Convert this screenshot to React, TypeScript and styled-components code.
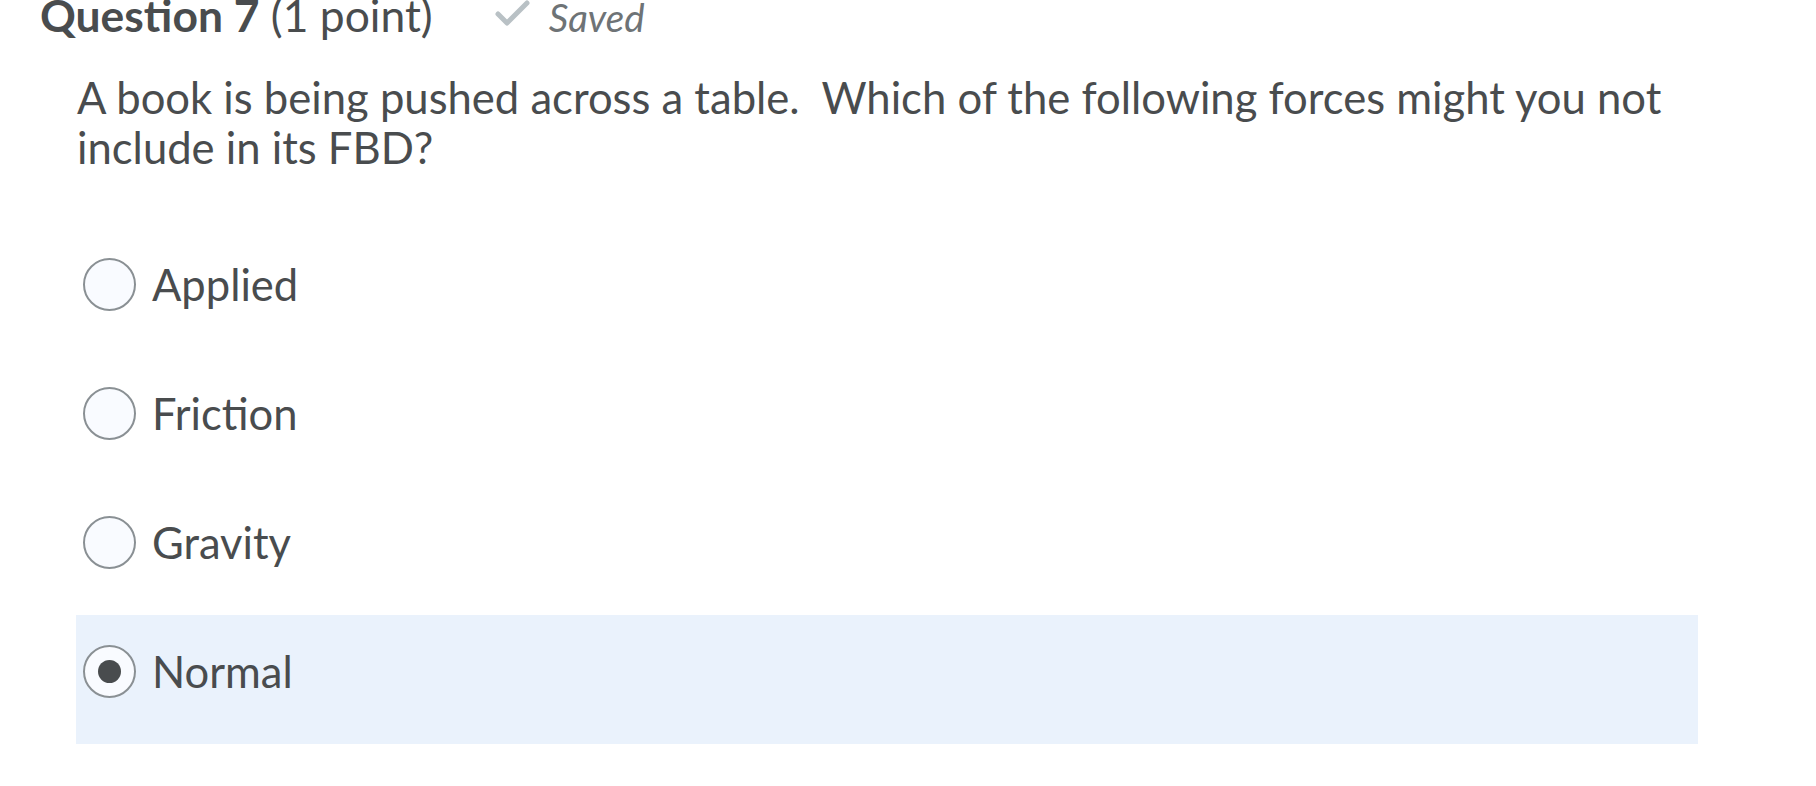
import React from "react";
import styled, { createGlobalStyle } from "styled-components";

const Global = createGlobalStyle`
  html, body { margin: 0; padding: 0; background: #ffffff; }
  body { font-family: Lato, "Noto Sans", sans-serif; color: #494c4e; }
`;

const Page = styled.div`
  display: flex;
  flex-direction: column;
  width: 1816px;
  height: 786px;
  overflow: hidden;
`;

const Header = styled.div`
  display: flex;
  align-items: baseline;
  padding-left: 40px;
  height: 30px;
  line-height: 30px;
`;

const Title = styled.h2`
  margin: 0;
  font-size: 44.4px;
  font-weight: 400;
  color: #494c4e;
  b { font-weight: 700; }
`;

const Status = styled.span`
  display: inline-flex;
  align-items: baseline;
  gap: 18px;
  margin-left: 62px;
  font-size: 38.5px;
  font-style: italic;
  color: #6e7376;
  svg { align-self: center; position: relative; top: -3px; }
`;

const Body = styled.div`
  display: flex;
  flex-direction: column;
  margin-left: 76px;
  width: 1622px;
`;

const Prompt = styled.p`
  margin: 42px 0 0 1px;
  font-size: 43.6px;
  line-height: 50px;
  color: #494c4e;
`;

const Options = styled.div`
  display: flex;
  flex-direction: column;
  margin-top: 56px;
`;

const Option = styled.label<{ $selected?: boolean }>`
  display: flex;
  align-items: flex-start;
  height: 129px;
  padding: 30px 0 0 7px;
  box-sizing: border-box;
  background: ${(p) => (p.$selected ? "#eaf2fc" : "transparent")};
  cursor: pointer;
`;

const Radio = styled.span<{ $checked?: boolean }>`
  flex: none;
  width: 53px;
  height: 53px;
  box-sizing: border-box;
  border: 2px solid #8a9094;
  border-radius: 50%;
  background: #f9fbff;
  display: flex;
  align-items: center;
  justify-content: center;
  &::after {
    content: "";
    display: ${(p) => (p.$checked ? "block" : "none")};
    width: 23px;
    height: 23px;
    border-radius: 50%;
    background: #494c4e;
  }
`;

const OptionText = styled.span`
  margin-left: 16px;
  font-size: 43.5px;
  line-height: 52px;
  color: #494c4e;
`;

const CheckIcon = () => (
  <svg width="36" height="28" viewBox="0 0 36 28">
    <polyline
      points="3,14 12,23 32,3"
      fill="none"
      stroke="#b9c1c5"
      strokeWidth="5"
      strokeLinecap="round"
      strokeLinejoin="round"
    />
  </svg>
);

const choices = ["Applied", "Friction", "Gravity", "Normal"];

export default function App() {
  const selected = "Normal";
  return (
    <Page>
      <Global />
      <Header>
        <Title>
          <b>Question 7</b> (1 point)
        </Title>
        <Status>
          <CheckIcon />
          Saved
        </Status>
      </Header>
      <Body>
        <Prompt>
          A book is being pushed across a table.{"\u00a0"} Which of the following forces might you not include in its FBD?
        </Prompt>
        <Options>
          {choices.map((c) => (
            <Option key={c} $selected={c === selected}>
              <Radio $checked={c === selected} />
              <OptionText>{c}</OptionText>
            </Option>
          ))}
        </Options>
      </Body>
    </Page>
  );
}
